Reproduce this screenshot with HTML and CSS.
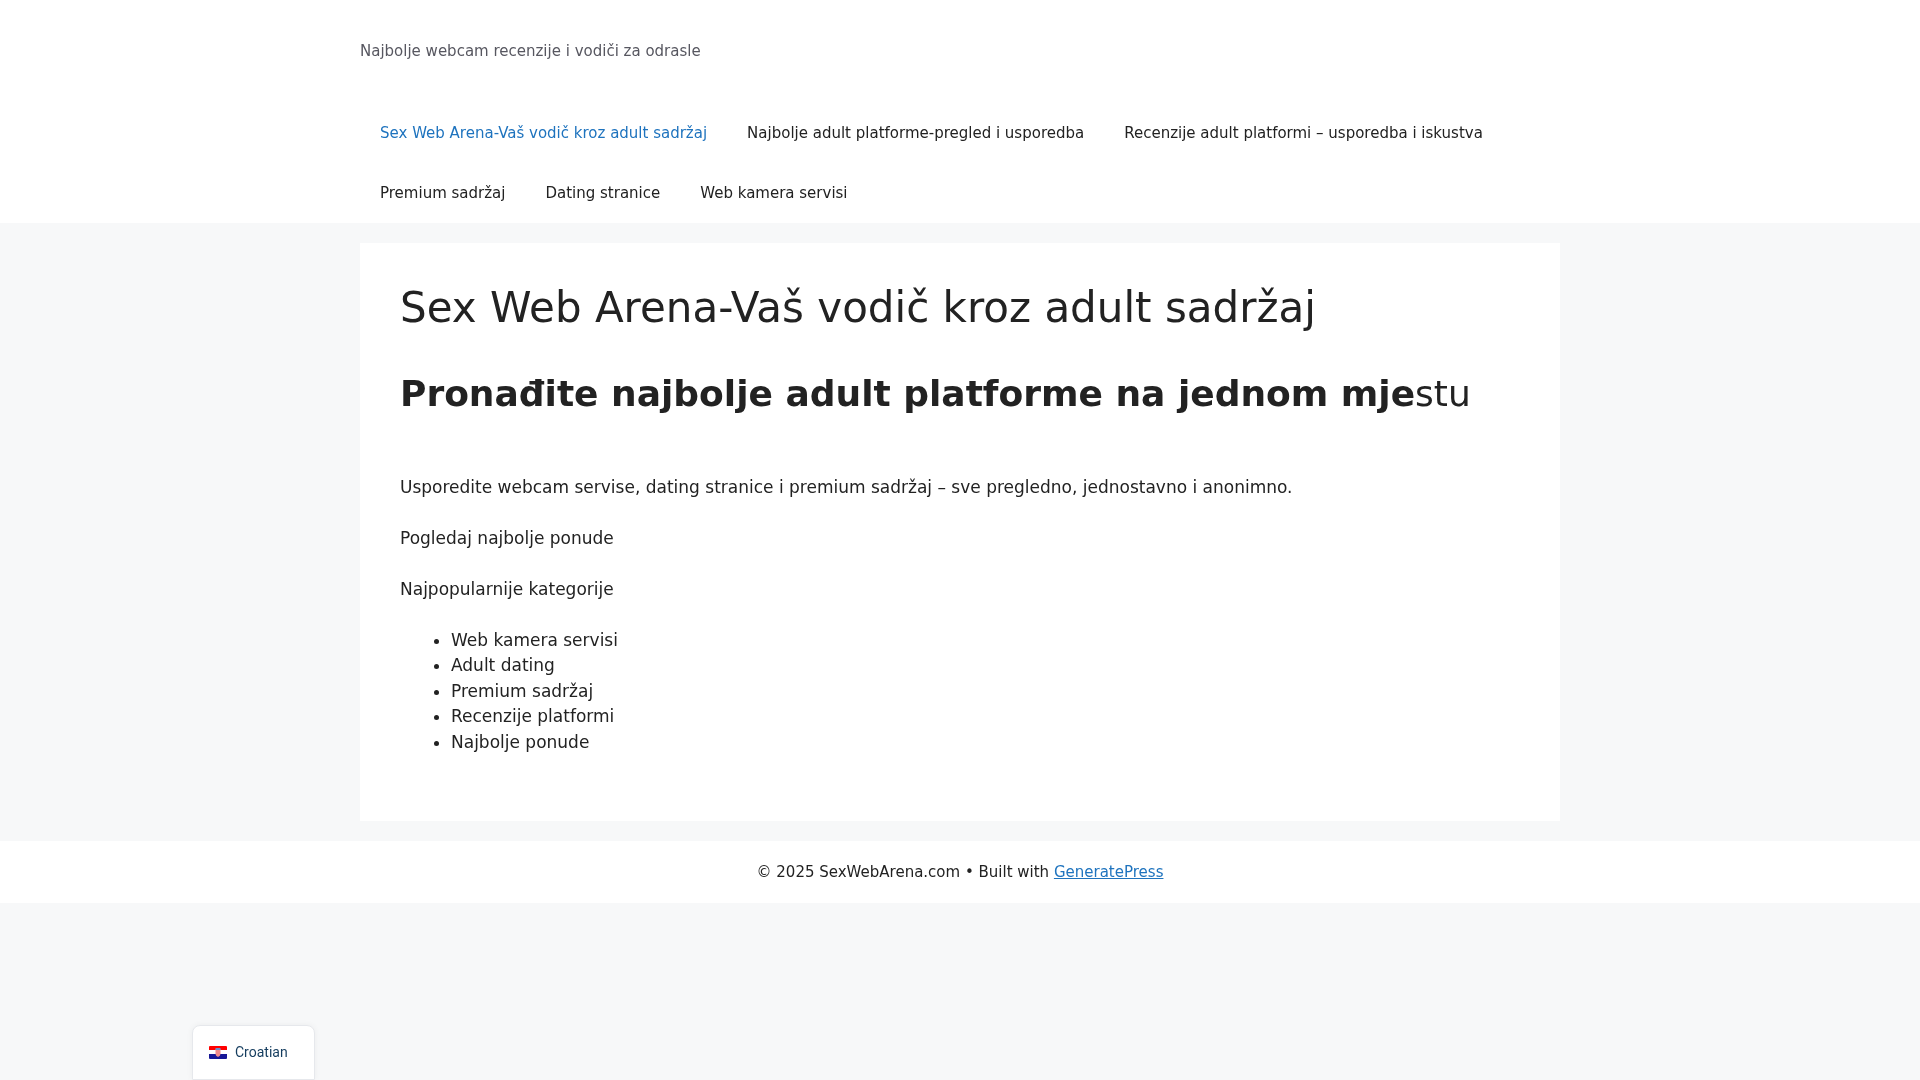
FILE: index.html
```html
<!DOCTYPE html>
<html lang="hr">
<head>
<meta charset="utf-8">
<title>Sex Web Arena</title>
<link rel="stylesheet" href="styles.css">
</head>
<body>
<header class="site-header">
  <div class="inner">
    <p class="tagline gray-text">Najbolje webcam recenzije i vodiči za odrasle</p>
    <nav class="nav gray-text">
      <a class="nav-link current" href="#">Sex Web Arena-Vaš vodič kroz adult sadržaj</a>
      <a class="nav-link" href="#">Najbolje adult platforme-pregled i usporedba</a>
      <a class="nav-link" href="#">Recenzije adult platformi – usporedba i iskustva</a>
      <a class="nav-link" href="#">Premium sadržaj</a>
      <a class="nav-link" href="#">Dating stranice</a>
      <a class="nav-link" href="#">Web kamera servisi</a>
    </nav>
  </div>
</header>
<main class="content-wrap">
  <article class="card">
    <div class="card-body gray-text">
      <h1 class="title">Sex Web Arena-Vaš vodič kroz adult sadržaj</h1>
      <h2 class="subtitle"><strong>Pronađite najbolje adult platforme na jednom mje</strong>stu</h2>
      <p class="para">Usporedite webcam servise, dating stranice i premium sadržaj – sve pregledno, jednostavno i anonimno.</p>
      <p class="para">Pogledaj najbolje ponude</p>
      <p class="para">Najpopularnije kategorije</p>
      <ul class="list">
        <li>Web kamera servisi</li>
        <li>Adult dating</li>
        <li>Premium sadržaj</li>
        <li>Recenzije platformi</li>
        <li>Najbolje ponude</li>
      </ul>
    </div>
  </article>
</main>
<footer class="footer"><div class="gray-text">© 2025 SexWebArena.com • Built with <a class="footer-link" href="#">GeneratePress</a></div></footer>
<div class="lang">
  <svg class="flag" viewBox="0 0 18 13" width="18" height="13">
    <rect width="18" height="5" rx="1" fill="#f00"/>
    <rect y="4" width="18" height="5" fill="#fff"/>
    <rect y="8" width="18" height="5" rx="1" fill="#171796"/>
    <rect y="8" width="18" height="3" fill="#171796"/>
    <path d="M6.500 3h5v5q0 2-2.500 3-2.500-1-2.500-3z" fill="#f08a8a"/>
    <rect x="6.500" y="2" width="5" height="2" fill="#6c8ec9"/>
  </svg>
  <span class="lang-name gray-text">Croatian</span>
</div>
</body>
</html>
```
FILE: styles.css
```css
* { box-sizing: border-box; }
html, body { margin: 0; padding: 0; }
body {
  background: #f7f8f9;
  color: #222;
  font-family: "DejaVu Sans", sans-serif;
  font-size: 17px;
  line-height: 1.5;
  min-height: 1080px;
}
.gray-text { will-change: transform; }
.site-header { background: #fff; }
.inner { width: 1200px; margin: 0 auto; }
.tagline { margin: 0; padding: 40px 0 0; height: 103px; font-size: 15px; line-height: 23px; color: #575760; }
.nav { display: flex; flex-wrap: wrap; }
.nav-link { padding: 0 20px; line-height: 60px; font-size: 15px; color: #222; text-decoration: none; }
.nav-link.current { color: #1e73be; }
.content-wrap { width: 1200px; margin: 20px auto; }
.card { background: #fff; padding: 40px; height: 578px; }
.title { margin: 0 0 39px; font-size: 42px; font-weight: 400; line-height: 1.2; }
.subtitle { margin: 0 0 59px; font-size: 36px; font-weight: 400; line-height: 1.2; }
.para { margin: 0 0 25.5px; }
.list { margin: 0 0 25.5px; padding-left: 51px; }
.footer { background: #fff; height: 62px; line-height: 62px; text-align: center; font-size: 15px; color: #222; }
.footer-link { color: #1e73be; }
.lang { position: fixed; left: 192px; bottom: 0; width: 123px; height: 55px; background: #fff; border: 1px solid #e6e8ec; border-radius: 8px 8px 0 0; box-shadow: 0 0 6px rgba(0,0,0,.05); display: flex; align-items: center; gap: 8px; padding-left: 16px; }
.flag { flex: none; }
.lang-name { font-family: Roboto, sans-serif; font-size: 14px; color: #143c5e; }
```
